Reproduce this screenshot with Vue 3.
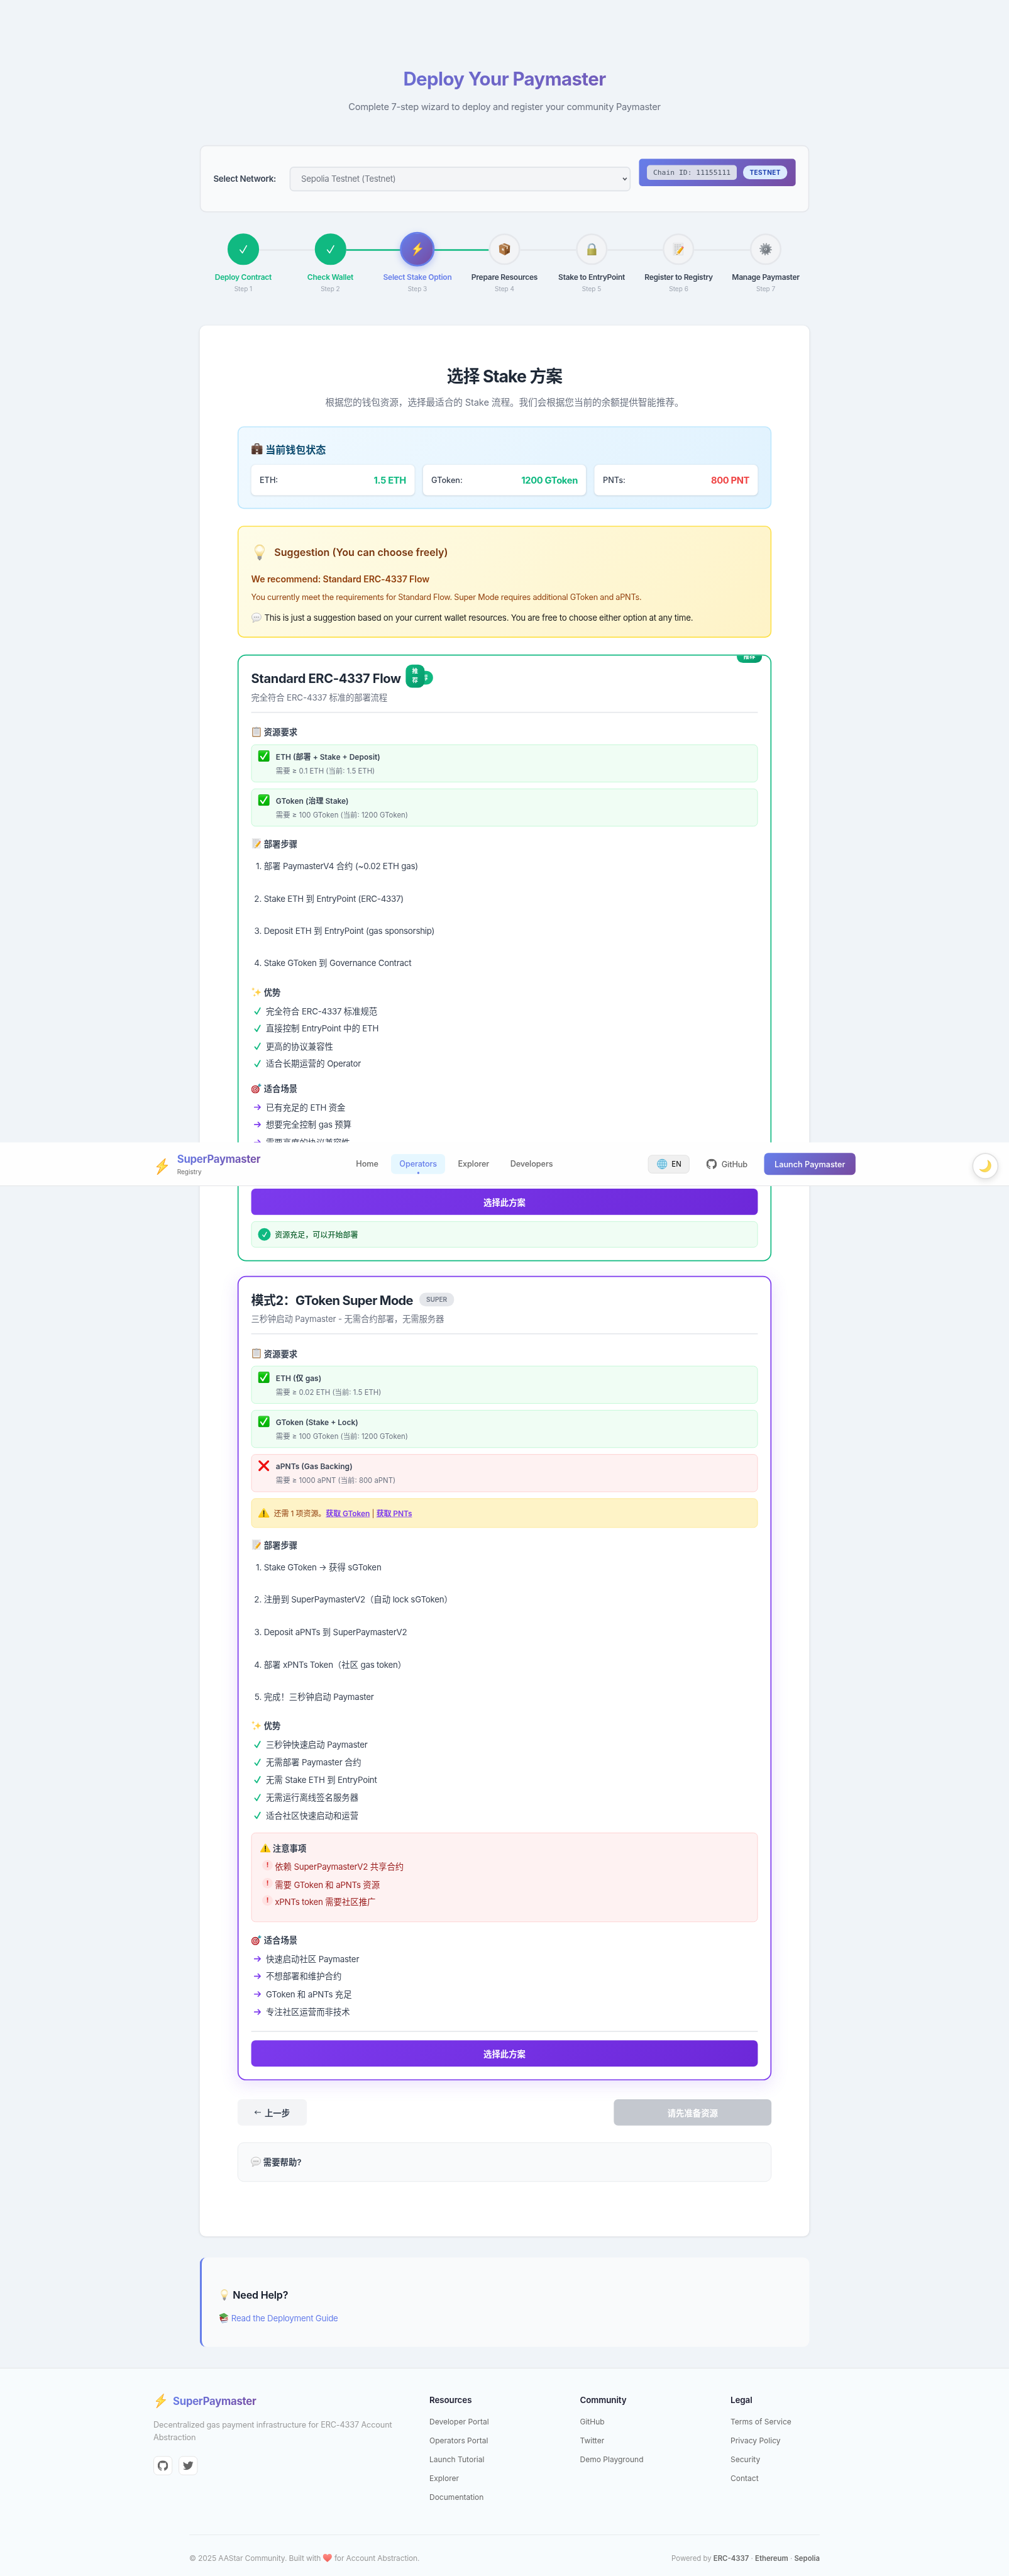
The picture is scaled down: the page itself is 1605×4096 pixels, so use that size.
<script setup>
const steps = [
  { name: 'Deploy Contract', state: 'done' },
  { name: 'Check Wallet', state: 'done', line: true },
  { name: 'Select Stake Option', state: 'active', line: true },
  { name: 'Prepare Resources', icon: 'box' },
  { name: 'Stake to EntryPoint', icon: 'lock' },
  { name: 'Register to Registry', icon: 'memo' },
  { name: 'Manage Paymaster', icon: 'gear' },
]

const balances = [
  { label: 'ETH:', value: '1.5 ETH' },
  { label: 'GToken:', value: '1200 GToken' },
  { label: 'PNTs:', value: '800 PNT', low: true },
]

const options = [
  {
    kind: 'standard',
    title: 'Standard ERC-4337 Flow',
    desc: '完全符合 ERC-4337 标准的部署流程',
    reqs: [
      { ok: true, name: 'ETH (部署 + Stake + Deposit)', need: '需要 ≥ 0.1 ETH (当前: 1.5 ETH)' },
      { ok: true, name: 'GToken (治理 Stake)', need: '需要 ≥ 100 GToken (当前: 1200 GToken)' },
    ],
    flow: [
      '部署 PaymasterV4 合约 (~0.02 ETH gas)',
      'Stake ETH 到 EntryPoint (ERC-4337)',
      'Deposit ETH 到 EntryPoint (gas sponsorship)',
      'Stake GToken 到 Governance Contract',
    ],
    pros: ['完全符合 ERC-4337 标准规范', '直接控制 EntryPoint 中的 ETH', '更高的协议兼容性', '适合长期运营的 Operator'],
    cautions: [],
    fits: ['已有充足的 ETH 资金', '想要完全控制 gas 预算', '需要高度的协议兼容性'],
  },
  {
    kind: 'super',
    title: '模式2：GToken Super Mode',
    desc: '三秒钟启动 Paymaster - 无需合约部署，无需服务器',
    reqs: [
      { ok: true, name: 'ETH (仅 gas)', need: '需要 ≥ 0.02 ETH (当前: 1.5 ETH)' },
      { ok: true, name: 'GToken (Stake + Lock)', need: '需要 ≥ 100 GToken (当前: 1200 GToken)' },
      { ok: false, name: 'aPNTs (Gas Backing)', need: '需要 ≥ 1000 aPNT (当前: 800 aPNT)' },
    ],
    flow: [
      'Stake GToken → 获得 sGToken',
      '注册到 SuperPaymasterV2（自动 lock sGToken）',
      'Deposit aPNTs 到 SuperPaymasterV2',
      '部署 xPNTs Token（社区 gas token）',
      '完成！三秒钟启动 Paymaster',
    ],
    pros: ['三秒钟快速启动 Paymaster', '无需部署 Paymaster 合约', '无需 Stake ETH 到 EntryPoint', '无需运行离线签名服务器', '适合社区快速启动和运营'],
    cautions: ['依赖 SuperPaymasterV2 共享合约', '需要 GToken 和 aPNTs 资源', 'xPNTs token 需要社区推广'],
    fits: ['快速启动社区 Paymaster', '不想部署和维护合约', 'GToken 和 aPNTs 充足', '专注社区运营而非技术'],
  },
]

const footerCols = [
  { title: 'Resources', links: ['Developer Portal', 'Operators Portal', 'Launch Tutorial', 'Explorer', 'Documentation'] },
  { title: 'Community', links: ['GitHub', 'Twitter', 'Demo Playground'] },
  { title: 'Legal', links: ['Terms of Service', 'Privacy Policy', 'Security', 'Contact'] },
]

// Latin runs are tracked slightly tighter than Chinese ones
const runs = (text) =>
  text
    .split(/([\u2e80-\uffef]+)/)
    .filter(Boolean)
    .map((t) => ({ t, latin: !/[\u2e80-\uffef]/.test(t) }))
</script>

<template>
  <div class="viewport">
    <svg class="sprite" width="0" height="0" aria-hidden="true">
      <defs>
        <linearGradient id="gBolt" x1="0" y1="0" x2="0" y2="1"><stop offset="0" stop-color="#ffc62b" /><stop offset=".5" stop-color="#ffe34a" /><stop offset="1" stop-color="#ffb31f" /></linearGradient>
        <linearGradient id="gBulb" x1="0" y1="0" x2="0" y2="1"><stop offset="0" stop-color="#f6dc8d" /><stop offset=".45" stop-color="#fffbe6" /><stop offset="1" stop-color="#f3cf6b" /></linearGradient>
        <linearGradient id="gLock" x1="0" y1="0" x2="1" y2="0"><stop offset="0" stop-color="#b3ab50" /><stop offset=".3" stop-color="#cfc86c" /><stop offset="1" stop-color="#9c933a" /></linearGradient>
        <linearGradient id="gCase" x1="0" y1="0" x2="0" y2="1"><stop offset="0" stop-color="#8a6656" /><stop offset="1" stop-color="#4b3128" /></linearGradient>
        <linearGradient id="gOk" x1="0" y1="0" x2="0" y2="1"><stop offset="0" stop-color="#3ed636" /><stop offset=".3" stop-color="#0cc40c" /><stop offset="1" stop-color="#05ad08" /></linearGradient>
        <linearGradient id="gTalk" x1="0" y1="0" x2="0" y2="1"><stop offset="0" stop-color="#ffffff" /><stop offset="1" stop-color="#dcdcdc" /></linearGradient>
        <linearGradient id="gMoon" x1="0" y1="0" x2="1" y2="1"><stop offset="0" stop-color="#f7c52c" /><stop offset="1" stop-color="#ffe76a" /></linearGradient>
        <linearGradient id="gHeart" x1="0" y1="0" x2="0" y2="1"><stop offset="0" stop-color="#ff8f87" /><stop offset="1" stop-color="#ef5f58" /></linearGradient>
        <linearGradient id="gWarn" x1="0" y1="0" x2="0" y2="1"><stop offset="0" stop-color="#ffe03a" /><stop offset="1" stop-color="#fcc404" /></linearGradient>
        <linearGradient id="gGear" x1="0" y1="0" x2="1" y2="1"><stop offset="0" stop-color="#a3a9af" /><stop offset="1" stop-color="#6b7178" /></linearGradient>
      </defs>
      <symbol id="bolt" viewBox="0 0 22 31">
        <path d="M17 .5.8 16.2l7.4.6L2 30.5l19.4-17.6-8-.4z" fill="url(#gBolt)" stroke="#f9a11b" stroke-width="1.2" stroke-linejoin="round" />
        <path d="M14.500 4.600 4.200 14.800l6.300.5-3.900 9.200" fill="none" stroke="#fff3a3" stroke-width="1" />
      </symbol>
      <symbol id="box" viewBox="0 0 24 24">
        <path d="M1.500 4.800 12.600 8.600v15L2.200 18.400z" fill="#b47c48" />
        <path d="M12.600 8.600 22.500 4.800l-.4 13.400-9.500 5.400z" fill="#8a5528" />
        <path d="M1.500 4.800 11.800.6l10.700 4.200-9.900 3.800z" fill="#a97343" />
        <path d="m5 3.400 10.800 4v4.800l2.800-1.200V6.300L8.200 2z" fill="#dcbfa0" />
        <path d="m7.200 10 3.400 1.200v4L7.200 13.800z" fill="#e9e1d8" />
        <path d="m16.200 17.200 3.800-2v2.600l-3.800 2z" fill="#5d3817" />
      </symbol>
      <symbol id="lock" viewBox="0 0 24 24">
        <path d="M6.200 12V7.800C6.200 4.400 8.800 2 12 2s5.800 2.400 5.800 5.800V12" fill="none" stroke="#86a0b0" stroke-width="2.800" />
        <path d="M5.900 12V7.800C5.900 4.400 8.600 1.500 12 1.500" fill="none" stroke="#c5dbe6" stroke-width="1.200" />
        <rect x="3.800" y="10.800" width="16.800" height="12.400" rx="1" fill="url(#gLock)" />
        <path d="M4 14.200h16.400M4 17h16.400M4 19.800h16.400" stroke="#8a7c25" stroke-width=".5" opacity=".5" />
        <rect x="3.800" y="22.200" width="16.800" height="1" fill="#857b2d" />
      </symbol>
      <symbol id="memo" viewBox="0 0 24 24">
        <rect x="2.200" y=".6" width="18.600" height="22.800" fill="#efefef" stroke="#d2d2d4" stroke-width=".6" />
        <path d="M4.500 3.600h13.500M4.500 6.400h14M4.500 9.200h10M4.500 12h9M4.500 14.800h5M4.500 17.600h4M4.500 20.400h3" stroke="#8e9096" stroke-width=".9" stroke-dasharray="2.200 .9 1.300 .7" />
        <path d="m17.600 8.200 3.400 2.300-7.600 10.400-4.900 2 .9-5.100z" fill="#f8c020" />
        <path d="m13.100 21 8-10.400-1.500-1.100L11.400 20z" fill="#e08e12" />
        <path d="m17.600 8.200 1-1.300c1-1 4 .9 3.500 2.200l-1.100 1.400z" fill="#ef6b6b" />
        <path d="m9.400 17.800-.9 5.100 4.900-2z" fill="#f3d9b0" />
        <path d="m8.800 21.200-.3 1.700 1.700-.7z" fill="#333" />
      </symbol>
      <symbol id="gear" viewBox="0 0 24 24">
        <circle cx="12" cy="12" r="10.200" fill="none" stroke="#8b9197" stroke-width="3" stroke-dasharray="2.100 3.240" />
        <circle cx="12" cy="12" r="6.400" fill="none" stroke="url(#gGear)" stroke-width="5.400" />
        <circle cx="12" cy="12" r="8.300" fill="none" stroke="#b4bac0" stroke-width=".8" />
        <circle cx="12" cy="12" r="4" fill="#565c63" />
        <circle cx="12" cy="12" r="2.900" fill="#d9dee2" />
        <path d="M12 10.200v3.600" stroke="#4a5057" stroke-width="1.500" />
      </symbol>
      <symbol id="case" viewBox="0 0 24 24">
        <path d="M8 6V2.8C8 1.8 8.600 1.300 9.500 1.300h5c.9 0 1.500.5 1.500 1.500V6" fill="none" stroke="#4d3a33" stroke-width="1.8" />
        <rect x=".8" y="5" width="22.400" height="18" rx="1.800" fill="url(#gCase)" />
        <rect x="5" y="5" width="1.600" height="18" fill="#3e2820" opacity=".6" />
        <rect x="17.400" y="5" width="1.600" height="18" fill="#3e2820" opacity=".6" />
        <path d="M.8 13c6 2.500 16.400 2.500 22.400 0" stroke="#37231b" stroke-width="1" fill="none" />
        <rect x="10" y="12.500" width="4" height="3.600" rx=".6" fill="#c9c4bb" />
        <rect x="9.800" y="18.800" width="4.400" height="4" fill="#f0e6df" />
      </symbol>
      <symbol id="bulb" viewBox="0 0 20 30">
        <path d="M10 .8c5.400 0 9 4 9 8.900 0 5.400-4 7.500-5 12.300H6C5 17.200 1 15.100 1 9.700 1 4.800 4.600.8 10 .8z" fill="url(#gBulb)" stroke="#e3c268" stroke-width=".8" />
        <ellipse cx="10" cy="8.500" rx="5" ry="5.500" fill="#fffef4" opacity=".9" />
        <path d="M6.200 22h7.600v4.600c0 1.500-2 2.600-3.800 2.600s-3.800-1.100-3.800-2.600z" fill="#b4b4b0" />
        <path d="M6.200 24h7.600M6.400 26.200h7.200" stroke="#77777a" stroke-width=".9" />
        <path d="M8 28.500h4l-1 1.300H9z" fill="#3d3d3f" />
      </symbol>
      <symbol id="talk" viewBox="0 0 24 24">
        <path d="M12 1.500c6.300 0 10.800 3.800 10.800 9s-4.500 9-10.800 9c-1 0-2-.1-2.900-.3-1.300 1.900-3.300 3.300-5.600 3.500 1-1.400 1.500-3 1.400-5C2.600 16 1.200 13.500 1.200 10.500c0-5.200 4.500-9 10.800-9z" fill="url(#gTalk)" stroke="#b5b5b5" stroke-width="1.200" />
        <circle cx="7.700" cy="10.600" r="1.200" fill="#8b8b8b" /><circle cx="12" cy="10.600" r="1.200" fill="#8b8b8b" /><circle cx="16.300" cy="10.600" r="1.200" fill="#8b8b8b" />
      </symbol>
      <symbol id="clip" viewBox="0 0 24 24">
        <rect x="2.300" y="2" width="19.400" height="21.500" rx="1.600" fill="#b08658" />
        <rect x="4.300" y="3.800" width="15.400" height="17.600" fill="#f2f2f3" />
        <rect x="6.300" y="6.500" width="11.400" height="12" fill="#d6d6d8" />
        <path d="M6.500 5.200V3.400h3.200C9.700 2 10.600.8 12 .8s2.300 1.200 2.300 2.600h3.200v1.800z" fill="#b2b7bc" stroke="#93989e" stroke-width=".5" />
      </symbol>
      <symbol id="ok" viewBox="0 0 24 24">
        <rect x=".5" y=".5" width="23" height="23" rx="3.600" fill="url(#gOk)" stroke="#0b9a10" stroke-width="1" />
        <path d="m5.600 12.800 4.200 6L18.300 5" fill="none" stroke="#fff" stroke-width="2.600" stroke-linecap="round" stroke-linejoin="round" />
      </symbol>
      <symbol id="cross" viewBox="0 0 24 24">
        <path d="M3 3 21 21M21 3 3 21" stroke="#ee0f0f" stroke-width="4.200" stroke-linecap="round" />
      </symbol>
      <symbol id="warn" viewBox="0 0 24 21">
        <path d="M12 1.200c.6 0 1 .3 1.300.8L23.200 18.600c.5 1-.1 1.900-1.100 1.900H1.900c-1 0-1.600-.9-1.100-1.900L10.700 2c.3-.5.7-.8 1.300-.8z" fill="url(#gWarn)" stroke="#eab308" stroke-width=".6" />
        <path d="M12 6.500v7.300" stroke="#231f10" stroke-width="2.200" stroke-linecap="round" />
        <circle cx="12" cy="17.300" r="1.400" fill="#231f10" />
      </symbol>
      <symbol id="sparkle" viewBox="0 0 24 24">
        <path d="M15.500 3.500c.9 5.800 2 7.300 7.700 9-5.700 1.700-6.800 3.200-7.700 9-.9-5.800-2-7.300-7.700-9 5.700-1.700 6.800-3.200 7.700-9z" fill="#ffd04a" />
        <path d="M4.500.8c.5 3 1.100 3.800 4 4.600-2.900.8-3.500 1.600-4 4.600-.5-3-1.100-3.800-4-4.600 2.900-.8 3.500-1.600 4-4.600z" fill="#ffd257" />
        <path d="M7.500 15.200c.4 2.500 1 3.400 3.600 4.100-2.600.7-3.200 1.600-3.600 4.100-.4-2.500-1-3.400-3.600-4.100 2.600-.7 3.200-1.600 3.600-4.100z" fill="#ffd257" />
      </symbol>
      <symbol id="target" viewBox="0 0 24 24">
        <circle cx="9.500" cy="14.500" r="9.300" fill="#b81f28" />
        <circle cx="9.200" cy="14.500" r="7" fill="#f3eded" />
        <circle cx="9.200" cy="14.500" r="5.300" fill="#d2303a" />
        <circle cx="9.200" cy="14.500" r="3.300" fill="#f3eded" />
        <circle cx="9.200" cy="14.500" r="1.700" fill="#c8202a" />
        <path d="m9.200 14.500 9-8.500" stroke="#475b60" stroke-width="1.200" />
        <path d="m16 7.700-.3-3.400L19.800.8l.7 2.800 3.200.9-3.800 4z" fill="#3d9fae" />
      </symbol>
      <symbol id="globe" viewBox="0 0 24 24">
        <circle cx="12" cy="12" r="11" fill="#c9edf9" stroke="#4ba9cf" stroke-width="1.300" />
        <ellipse cx="12" cy="12" rx="5.200" ry="11" fill="none" stroke="#4ba9cf" stroke-width="1.200" />
        <path d="M12 1v22M1 12h22M2.700 6.500h18.600M2.700 17.500h18.600" stroke="#4ba9cf" stroke-width="1.200" />
      </symbol>
      <symbol id="moon" viewBox="0 0 24 24">
        <path d="M16.200.8c4.600 2.200 7 6.700 6.300 12-.8 6.300-6 10.700-12.300 10.300-4-.2-7.300-2-9.300-5.200 3.700 1.800 8.400 1.400 11.900-1.300 4.800-3.700 6-10 3.400-15.800z" fill="url(#gMoon)" stroke="#e9b92f" stroke-width=".7" />
      </symbol>
      <symbol id="books" viewBox="0 0 24 24">
        <path d="m5 18.500 14-1.500 1.500 4L8 23.500z" fill="#3f72b5" />
        <path d="m6.500 20 13.200-1.700.8 2.300L8 22.600z" fill="#f2f2f2" />
        <path d="m2.500 10 4-1.500 14 2 .5 6.500L5.500 19C3.500 17 2.500 12.500 2.500 10z" fill="#b5312c" />
        <path d="M6.500 14.500 20 13.200l.2 2.400L7 17.400z" fill="#f4ece0" />
        <path d="m1.500 5 11-4.500L22.500 7l-9.800 5.200z" fill="#58ab4e" />
        <path d="m1.500 5 11.200 7.200v2L2 7z" fill="#2e6e2b" />
        <path d="m12.700 12.200 9.800-5.200v1.800l-9.800 5.400z" fill="#e9e6d6" />
      </symbol>
      <symbol id="heart" viewBox="0 0 24 22">
        <path d="M12 21.500C6 17 .6 12.500.6 7.200.6 3.500 3.300.8 6.600.8c2.300 0 4.300 1.300 5.400 3.200C13.100 2.100 15.100.8 17.400.8c3.300 0 6 2.700 6 6.400 0 5.300-5.400 9.800-11.400 14.300z" fill="url(#gHeart)" />
      </symbol>
      <symbol id="check" viewBox="0 0 14 16"><path d="m2 9.400 3.600 4.400L12 2.400" fill="none" stroke="currentColor" stroke-width="2.200" stroke-linecap="round" stroke-linejoin="round" /></symbol>
      <symbol id="thincheck" viewBox="0 0 24 24"><path d="m4.500 13.500 5.500 7L19.500 4" fill="none" stroke="currentColor" stroke-width="2.200" stroke-linecap="round" stroke-linejoin="round" /></symbol>
      <symbol id="arrow" viewBox="0 0 14 12"><path d="M1.200 6h11M8 1.600 12.400 6 8 10.400" fill="none" stroke="currentColor" stroke-width="2" stroke-linecap="round" stroke-linejoin="round" /></symbol>
      <symbol id="github" viewBox="0 0 16 16"><path fill="currentColor" d="M8 0C3.580 0 0 3.580 0 8c0 3.540 2.290 6.530 5.470 7.590.4.07.55-.17.55-.38 0-.19-.01-.82-.01-1.490-2.010.37-2.530-.49-2.690-.94-.09-.23-.48-.94-.82-1.130-.28-.15-.68-.52-.01-.53.63-.01 1.080.58 1.230.82.72 1.210 1.870.87 2.330.66.07-.52.28-.87.51-1.070-1.780-.2-3.640-.89-3.640-3.950 0-.87.31-1.590.82-2.150-.08-.2-.36-1.020.08-2.120 0 0 .67-.21 2.200.82.64-.18 1.320-.27 2-.27s1.360.09 2 .27c1.530-1.040 2.200-.82 2.200-.82.44 1.100.16 1.920.08 2.120.51.56.82 1.270.82 2.150 0 3.070-1.870 3.750-3.650 3.950.29.25.54.73.54 1.480 0 1.070-.01 1.930-.01 2.200 0 .21.15.46.55.38A8.013 8.013 0 0 0 16 8c0-4.420-3.580-8-8-8z" /></symbol>
      <symbol id="twitter" viewBox="0 0 24 24"><path fill="currentColor" d="M23.953 4.570a10 10 0 0 1-2.825.775 4.958 4.958 0 0 0 2.163-2.723c-.951.555-2.005.959-3.127 1.184a4.920 4.920 0 0 0-8.384 4.482C7.690 8.095 4.067 6.130 1.640 3.162a4.822 4.822 0 0 0-.666 2.475c0 1.710.87 3.213 2.188 4.096a4.904 4.904 0 0 1-2.228-.616v.06a4.923 4.923 0 0 0 3.946 4.827 4.996 4.996 0 0 1-2.212.085 4.936 4.936 0 0 0 4.604 3.417 9.867 9.867 0 0 1-6.102 2.105c-.39 0-.779-.023-1.170-.067a13.995 13.995 0 0 0 7.557 2.209c9.053 0 13.998-7.496 13.998-13.985 0-.21 0-.42-.015-.63A9.935 9.935 0 0 0 24 4.590z" /></symbol>
    </svg>

    <div class="page">
      <header class="hero">
        <h1>Deploy Your Paymaster</h1>
        <p>Complete 7-step wizard to deploy and register your community Paymaster</p>
      </header>

      <section class="network">
        <label>Select Network:</label>
        <div class="select">
          <span>Sepolia Testnet (Testnet)</span>
          <svg width="10" height="7" viewBox="0 0 10 7"><path d="m1.500 1.200 3.500 4 3.500-4" fill="none" stroke="#4b4f57" stroke-width="1.800" /></svg>
        </div>
        <div class="chain">
          <code>Chain ID: 11155111</code>
          <span>TESTNET</span>
        </div>
      </section>

      <ol class="wizard">
        <li v-for="(s, i) in steps" :key="s.name" :class="s.state">
          <i v-if="i < steps.length - 1" class="line" :class="{ on: s.line }"></i>
          <div class="dot">
            <svg v-if="s.state === 'done'" class="i22"><use href="#thincheck" /></svg>
            <svg v-else-if="s.state === 'active'" class="dotbolt"><use href="#bolt" /></svg>
            <svg v-else class="i24"><use :href="'#' + s.icon" /></svg>
          </div>
          <b>{{ s.name }}</b>
          <small>Step {{ i + 1 }}</small>
        </li>
      </ol>

      <main class="panel">
        <h2>选择 Stake 方案</h2>
        <p class="lead">根据您的钱包资源，选择最适合的 Stake 流程。我们会根据您当前的余额提供智能推荐。</p>

        <section class="wallet">
          <h3><svg class="i22"><use href="#case" /></svg>当前钱包状态</h3>
          <div class="balances">
            <div v-for="b in balances" :key="b.label"><span>{{ b.label }}</span><b :class="{ low: b.low }">{{ b.value }}</b></div>
          </div>
        </section>

        <section class="suggest">
          <div class="shead"><svg class="bulb"><use href="#bulb" /></svg><h3>Suggestion (You can choose freely)</h3></div>
          <p class="rec">We recommend: Standard ERC-4337 Flow</p>
          <p class="why">You currently meet the requirements for Standard Flow. Super Mode requires additional GToken and aPNTs.</p>
          <p class="note"><svg class="i20"><use href="#talk" /></svg>This is just a suggestion based on your current wallet resources. You are free to choose either option at any time.</p>
        </section>

        <section v-for="o in options" :key="o.kind" class="opt" :class="o.kind">
          <div v-if="o.kind === 'standard'" class="ribbon">推荐</div>
          <header>
            <div class="trow">
              <h3>{{ o.title }}</h3>
              <div v-if="o.kind === 'standard'" class="badges">
                <span class="under">荐</span>
                <span class="over">推<br />荐</span>
              </div>
              <span v-else class="tag">SUPER</span>
            </div>
            <p>{{ o.desc }}</p>
          </header>

          <h4 class="first"><svg class="i20"><use href="#clip" /></svg>资源要求</h4>
          <div class="reqs">
            <div v-for="r in o.reqs" :key="r.name" class="req" :class="{ bad: !r.ok }">
              <svg class="i22"><use :href="r.ok ? '#ok' : '#cross'" /></svg>
              <div><b>{{ r.name }}</b><span>{{ r.need }}</span></div>
            </div>
            <div v-if="o.kind === 'super'" class="missing">
              <svg class="warn"><use href="#warn" /></svg>
              <span>还需 1 项资源。<a>获取 GToken</a> | <a>获取 PNTs</a></span>
            </div>
          </div>

          <h4 class="flowtitle"><svg class="i20"><use href="#memo" /></svg>部署步骤</h4>
          <ol class="flow">
            <li v-for="(f, n) in o.flow" :key="f"><em>{{ n + 1 }}.</em><p><span v-for="(r, k) in runs(f)" :key="k" :class="{ latin: r.latin }">{{ r.t }}</span></p></li>
          </ol>

          <h4 class="protitle"><svg class="i20"><use href="#sparkle" /></svg>优势</h4>
          <ul class="pts">
            <li v-for="p in o.pros" :key="p"><svg class="tick"><use href="#check" /></svg><p><span v-for="(r, k) in runs(p)" :key="k" :class="{ latin: r.latin }">{{ r.t }}</span></p></li>
          </ul>

          <div v-if="o.cautions.length" class="caution">
            <h4><svg class="warn small"><use href="#warn" /></svg>注意事项</h4>
            <ul class="pts red">
              <li v-for="c in o.cautions" :key="c"><i>!</i><p><span v-for="(r, k) in runs(c)" :key="k" :class="{ latin: r.latin }">{{ r.t }}</span></p></li>
            </ul>
          </div>

          <h4 class="fittitle"><svg class="i20"><use href="#target" /></svg>适合场景</h4>
          <ul class="pts fits">
            <li v-for="f in o.fits" :key="f"><svg class="arr"><use href="#arrow" /></svg><p><span v-for="(r, k) in runs(f)" :key="k" :class="{ latin: r.latin }">{{ r.t }}</span></p></li>
          </ul>

          <footer>
            <button>选择此方案</button>
            <div v-if="o.kind === 'standard'" class="ready">
              <i><svg><use href="#check" /></svg></i>资源充足，可以开始部署
            </div>
          </footer>
        </section>

        <div class="actions">
          <button class="prev"><svg width="13" height="10" viewBox="0 0 13 10"><path d="M12.500 5H1M4.500 1.800 1 5l3.500 3.200" fill="none" stroke="#374151" stroke-width="1.200" /></svg>上一步</button>
          <button class="next">请先准备资源</button>
        </div>

        <div class="faq"><svg class="i20"><use href="#talk" /></svg>需要帮助?</div>
      </main>

      <aside class="help">
        <h3><svg class="hbulb"><use href="#bulb" /></svg>Need Help?</h3>
        <a><svg class="i20"><use href="#books" /></svg>Read the Deployment Guide</a>
      </aside>

      <footer class="foot">
        <div class="cols">
          <div class="brand">
            <div class="logo"><svg><use href="#bolt" /></svg><span>SuperPaymaster</span></div>
            <p>Decentralized gas payment infrastructure for ERC-4337 Account Abstraction</p>
            <div class="social">
              <a><svg><use href="#github" /></svg></a>
              <a><svg><use href="#twitter" /></svg></a>
            </div>
          </div>
          <div v-for="c in footerCols" :key="c.title" class="col">
            <h4>{{ c.title }}</h4>
            <a v-for="l in c.links" :key="l">{{ l }}</a>
          </div>
        </div>
        <div class="legal">
          <span class="copy">© 2025 AAStar Community. Built with <svg><use href="#heart" /></svg> for Account Abstraction.</span>
          <span class="power">Powered by <b>ERC-4337</b> · <b>Ethereum</b> · <b>Sepolia</b></span>
        </div>
      </footer>

      <nav class="topbar">
        <div class="logo">
          <svg><use href="#bolt" /></svg>
          <div><strong>SuperPaymaster</strong><small>Registry</small></div>
        </div>
        <div class="links">
          <a>Home</a><a class="current">Operators</a><a>Explorer</a><a>Developers</a>
        </div>
        <div class="tools">
          <button class="lang"><svg><use href="#globe" /></svg>EN</button>
          <a class="gh"><svg><use href="#github" /></svg>GitHub</a>
          <button class="launch">Launch Paymaster</button>
        </div>
        <button class="theme"><svg><use href="#moon" /></svg></button>
      </nav>
    </div>
  </div>
</template>

<style>
html,
body {
  margin: 0;
  background: #f0f4f8;
}
</style>

<style scoped>
* {
  box-sizing: border-box;
}
.viewport {
  width: 1605px;
  height: 4096px;
  overflow: hidden;
}
.sprite {
  position: absolute;
}
.page {
  position: relative;
  display: flex;
  flex-direction: column;
  align-items: center;
  width: 1920px;
  height: 4900px;
  transform: scale(0.8359375);
  transform-origin: 0 0;
  background: #f0f4f8;
  color: #1f2937;
  font-family: Inter, "Noto Sans CJK SC", sans-serif;
  font-size: 16px;
}
h1, h2, h3, h4, p, ol, ul {
  margin: 0;
  padding: 0;
  list-style: none;
}
button {
  font: inherit;
  border: 0;
  padding: 0;
}
svg {
  flex: none;
}
.latin {
  letter-spacing: -0.31px;
  white-space: pre;
}
.i24 { width: 24px; height: 24px; }
.i22 { width: 22px; height: 22px; }
.i20 { width: 20px; height: 20px; }

.hero {
  height: 276px;
  padding-top: 128px;
  text-align: center;
}
.hero h1 {
  width: 1160px;
  font-size: 35.2px;
  line-height: 44px;
  font-weight: 700;
  letter-spacing: -0.7px;
  background: linear-gradient(135deg, #667eea 0%, #764ba2 100%);
  -webkit-background-clip: text;
  background-clip: text;
  color: transparent;
}
.hero p {
  margin-top: 18px;
  font-size: 17.6px;
  letter-spacing: -0.34px;
  line-height: 26px;
  color: #6b7280;
}

.network {
  display: flex;
  align-items: center;
  width: 1160px;
  height: 128px;
  padding: 0 24px;
  border: 2px solid #e5e7eb;
  border-radius: 12px;
  background: #f9fafb;
}
.network label {
  width: 145px;
  font-weight: 600;
  letter-spacing: -0.3px;
  color: #374151;
}
.select {
  display: flex;
  align-items: center;
  justify-content: space-between;
  width: 649px;
  height: 47px;
  padding: 0 4px 0 20px;
  border: 2px solid #e0e3e8;
  border-radius: 8px;
  background: #f4f5f7;
  color: #717680;
  letter-spacing: -0.35px;
}
.chain {
  display: flex;
  align-items: center;
  gap: 12px;
  width: 298px;
  height: 52px;
  margin: -24px 0 0 16px;
  padding-left: 15px;
  border-radius: 6px;
  background: linear-gradient(135deg, #667eea 0%, #764ba2 100%);
}
.chain code {
  width: 171px;
  border-radius: 6px;
  background: #dadce9;
  color: #4b5563;
  font-family: "DejaVu Sans Mono", monospace;
  font-size: 13.6px;
  line-height: 28px;
  text-align: center;
}
.chain span {
  width: 84px;
  border-radius: 12px;
  background: #dbeafe;
  color: #1e40af;
  font-size: 12px;
  font-weight: 700;
  letter-spacing: 0.5px;
  line-height: 26px;
  text-align: center;
}

.wizard {
  display: flex;
  width: 1160px;
  margin-top: 40px;
  height: 175px;
}
.wizard li {
  position: relative;
  flex: 1;
  display: flex;
  flex-direction: column;
  align-items: center;
}
.line {
  position: absolute;
  top: 30px;
  left: calc(50% + 30px);
  width: calc(100% - 60px);
  height: 3px;
  background: #e5e7eb;
}
.line.on {
  background: #10b981;
}
.dot {
  position: relative;
  display: flex;
  align-items: center;
  justify-content: center;
  width: 60px;
  height: 60px;
  border: 3px solid #e5e7eb;
  border-radius: 50%;
  background: #f3f4f6;
}
.done .dot {
  border-color: #10b981;
  background: #10b981;
  color: #fff;
}
.done .dot svg {
  width: 20px;
  height: 20px;
}
.active .dot {
  border-color: #667eea;
  background: linear-gradient(135deg, #667eea 0%, #764ba2 100%);
  transform: scale(1.1);
  box-shadow: 0 4px 12px rgba(102, 126, 234, 0.4);
}
.dotbolt {
  width: 17px;
  height: 24px;
}
.wizard b {
  margin-top: 13px;
  font-size: 14.4px;
  font-weight: 600;
  letter-spacing: -0.32px;
  line-height: 20px;
  color: #374151;
  white-space: nowrap;
}
.wizard small {
  margin-top: 4px;
  font-size: 12px;
  line-height: 18px;
  color: #9ca3af;
}
.wizard .done b { color: #10b981; }
.wizard .active b { color: #667eea; }

.panel {
  width: 1160px;
  height: 3635px;
  padding: 77px 72px 0;
  border-radius: 12px;
  background: #fff;
  box-shadow: 0 1px 4px rgba(0, 0, 0, 0.1);
}
.panel h2 {
  font-size: 32px;
  font-weight: 700;
  letter-spacing: -1.1px;
  line-height: 40px;
  text-align: center;
}
.lead {
  margin-top: 16px;
  font-size: 17.6px;
  letter-spacing: -0.18px;
  line-height: 26px;
  text-align: center;
  color: #6b7280;
}

.wallet {
  height: 157px;
  margin-top: 33px;
  padding: 27px 24px 0;
  border: 2px solid #bae6fd;
  border-radius: 12px;
  background: linear-gradient(135deg, #f0f9ff 0%, #e0f2fe 100%);
}
.wallet h3 {
  display: flex;
  align-items: center;
  gap: 5px;
  height: 28px;
  font-size: 19.2px;
  font-weight: 600;
  color: #0c4a6e;
}
.balances {
  display: flex;
  gap: 16px;
  margin-top: 16px;
}
.balances div {
  flex: 1;
  display: flex;
  align-items: center;
  justify-content: space-between;
  height: 58px;
  padding: 0 16px;
  border-radius: 8px;
  background: #fff;
  box-shadow: 0 1px 3px rgba(0, 0, 0, 0.1);
}
.balances span {
  font-size: 15.2px;
  font-weight: 500;
  color: #374151;
}
.balances b {
  font-size: 17.6px;
  font-weight: 700;
  letter-spacing: -0.4px;
  color: #10b981;
}
.balances b.low {
  color: #ef4444;
}

.suggest {
  height: 213px;
  margin-top: 32px;
  padding: 28px 24px 0;
  border: 2px solid #fde047;
  border-radius: 12px;
  background: linear-gradient(135deg, #fefce8 0%, #fef3c7 100%);
}
.shead {
  display: flex;
  align-items: center;
  height: 40px;
}
.bulb {
  width: 20px;
  height: 31px;
  margin: 0 18px 0 6px;
}
.suggest h3 {
  font-size: 19.2px;
  font-weight: 600;
  color: #78350f;
}
.suggest p {
  font-size: 15.2px;
  letter-spacing: -0.27px;
  line-height: 26px;
  color: #92400e;
  white-space: nowrap;
}
.suggest .rec {
  margin-top: 19px;
  font-size: 17px;
  font-weight: 600;
  letter-spacing: -0.18px;
}
.suggest .why {
  margin-top: 8px;
}
.suggest .note {
  display: flex;
  align-items: center;
  gap: 5px;
  margin-top: 13px;
  font-size: 16px;
  letter-spacing: -0.34px;
  color: #1a1a1a;
}

.opt {
  position: relative;
  margin-top: 32px;
  padding: 24px;
  border: 2px solid #10b981;
  border-radius: 16px;
  background: #fff;
  overflow: hidden;
}
.opt.super {
  margin-top: 28px;
  border-color: #7c3aed;
  overflow: visible;
  box-shadow: 0 8px 32px rgba(124, 58, 237, 0.15);
}
.ribbon {
  position: absolute;
  top: -10px;
  right: 16px;
  width: 48px;
  height: 24px;
  border-radius: 12px;
  background: linear-gradient(135deg, #10b981 0%, #059669 100%);
  color: #fff;
  font-size: 11.5px;
  font-weight: 700;
  line-height: 23px;
  text-align: center;
}
.opt header {
  height: 85px;
  border-bottom: 2px solid #e5e7eb;
}
.trow {
  display: flex;
  align-items: center;
  height: 38px;
}
.trow h3 {
  font-size: 24px;
  font-weight: 700;
  letter-spacing: -0.42px;
  white-space: nowrap;
}
.super .trow h3 {
  letter-spacing: -0.75px;
}
.badges {
  position: relative;
  width: 52px;
  height: 44px;
  margin: -8px 0 0 9px;
}
.badges span {
  position: absolute;
  color: #fff;
  font-weight: 700;
  text-align: center;
}
.under {
  top: 12px;
  right: 0;
  width: 46px;
  height: 26px;
  padding-left: 16px;
  border-radius: 13px;
  background: #10b981;
  font-size: 11px;
  line-height: 26px;
}
.over {
  left: 0;
  top: 0;
  width: 36px;
  height: 44px;
  padding-top: 4px;
  border-radius: 12px;
  background: linear-gradient(135deg, #10b981 0%, #059669 100%);
  font-size: 11.2px;
  line-height: 17.9px;
}
.tag {
  width: 66px;
  height: 26px;
  margin-left: 12px;
  border-radius: 12px;
  background: #e5e7eb;
  color: #6b7280;
  font-size: 12px;
  font-weight: 600;
  line-height: 26px;
  text-align: center;
}
.opt header p {
  margin-top: 6px;
  font-size: 16px;
  letter-spacing: -0.2px;
  line-height: 24px;
  color: #6b7280;
}
h4 {
  display: flex;
  align-items: center;
  gap: 4px;
  height: 26px;
  font-size: 16px;
  font-weight: 600;
  color: #374151;
}
.first { margin: 23px 0 11px; }
.reqs {
  display: flex;
  flex-direction: column;
  gap: 12px;
}
.req {
  display: flex;
  gap: 12px;
  height: 72px;
  padding: 10px 12px;
  border: 1px solid #bbf7d0;
  border-radius: 8px;
  background: #f0fdf4;
}
.req.bad {
  border-color: #fecaca;
  background: #fef2f2;
}
.req b, .req span {
  display: block;
}
.req b {
  margin-top: 1px;
  font-size: 14.4px;
  font-weight: 600;
  line-height: 24px;
  color: #374151;
}
.req span {
  margin-top: 3px;
  font-size: 13.6px;
  line-height: 22px;
  color: #6b7280;
}
.missing {
  display: flex;
  align-items: center;
  gap: 8px;
  height: 56px;
  padding: 0 12px;
  border: 1px solid #fde68a;
  border-radius: 8px;
  background: #fef3c7;
  font-size: 14.4px;
  letter-spacing: -0.15px;
  color: #92400e;
}
.missing a {
  color: #7c3aed;
  font-weight: 600;
  text-decoration: underline;
}
.warn { width: 22px; height: 19px; }
.warn.small { width: 20px; height: 18px; }
.flowtitle { margin-top: 19px; }
.flow li {
  display: flex;
  height: 61.75px;
  line-height: 61.75px;
  color: #374151;
}
.flow em {
  width: 20px;
  margin-right: 4px;
  font-style: normal;
  text-align: right;
}
.protitle { margin-top: 9.7px; }
.pts { margin-top: 6.2px; }
.pts li {
  display: flex;
  align-items: center;
  height: 33.6px;
  padding-left: 5px;
  line-height: 24px;
  color: #374151;
}
.tick {
  width: 14px;
  height: 16px;
  margin-right: 9px;
  color: #10b981;
}
.arr {
  width: 14px;
  height: 12px;
  margin-right: 9px;
  color: #7c3aed;
}
.caution {
  margin-top: 16.6px;
  padding: 15.3px 16px 20.3px;
  border: 1px solid #fecaca;
  border-radius: 8px;
  background: #fef2f2;
}
.pts.red li {
  padding-left: 4px;
  color: #991b1b;
}
.red i {
  width: 20px;
  height: 20px;
  margin: -6px 4px 0 0;
  border-radius: 50%;
  background: #fee2e2;
  color: #dc2626;
  font-size: 12.8px;
  font-style: normal;
  font-weight: 700;
  line-height: 20px;
  text-align: center;
}
.fittitle { margin-top: 16.4px; }
.caution + .fittitle { margin-top: 20.3px; }
.fits { min-height: 134.4px; }
.opt footer {
  margin-top: 19.500px;
  padding-top: 16px;
  border-top: 2px solid #e5e7eb;
}
.opt button {
  display: block;
  width: 100%;
  height: 50px;
  border-radius: 8px;
  background: linear-gradient(135deg, #7c3aed 0%, #6d28d9 100%);
  color: #fff;
  font-weight: 600;
}
.ready {
  display: flex;
  align-items: center;
  gap: 8px;
  height: 50px;
  margin-top: 12px;
  padding-left: 12px;
  border: 1px solid #bbf7d0;
  border-radius: 8px;
  background: #f0fdf4;
  color: #166534;
  font-size: 14.4px;
  font-weight: 500;
}
.ready i {
  display: flex;
  align-items: center;
  justify-content: center;
  width: 24px;
  height: 24px;
  border-radius: 50%;
  background: #10b981;
  color: #fff;
}
.ready svg {
  width: 11px;
  height: 12px;
}

.actions {
  display: flex;
  justify-content: space-between;
  margin-top: 36px;
}
.actions button {
  height: 50px;
  border-radius: 8px;
  font-weight: 600;
}
.prev {
  display: flex;
  align-items: center;
  justify-content: center;
  gap: 6px;
  width: 132px;
  background: #f3f4f6;
  color: #374151;
}
.next {
  width: 300px;
  background: #c4c8cf;
  color: #fff;
}
.faq {
  display: flex;
  align-items: center;
  gap: 4px;
  height: 75px;
  margin-top: 32px;
  padding-left: 24px;
  border: 1px solid #e5e7eb;
  border-radius: 12px;
  background: #f9fafb;
  color: #374151;
  font-weight: 600;
}

.help {
  width: 1160px;
  height: 170px;
  margin-top: 40px;
  padding: 57px 32px 0;
  border-left: 4px solid #667eea;
  border-radius: 12px;
  background: #f9fafb;
}
.help h3, .help a {
  display: flex;
  align-items: center;
  height: 28px;
}
.help h3 {
  gap: 9px;
  padding-left: 4px;
  font-size: 19.2px;
  font-weight: 600;
  letter-spacing: -0.2px;
  color: #111827;
}
.hbulb { width: 14px; height: 22px; }
.help a {
  gap: 4px;
  margin-top: 16px;
  letter-spacing: -0.32px;
  color: #667eea;
}

.foot {
  width: 1920px;
  height: 396px;
  margin-top: 40px;
  border-top: 1px solid #e0e0e0;
  background: #f7fbfd;
}
.cols {
  display: flex;
  height: 316px;
  padding: 44px 0 0 292px;
}
.brand {
  width: 525px;
}
.logo {
  display: flex;
  align-items: center;
}
.logo span, .logo strong {
  font-weight: 700;
  letter-spacing: -0.3px;
  background: linear-gradient(135deg, #667eea 0%, #764ba2 100%);
  -webkit-background-clip: text;
  background-clip: text;
  color: transparent;
}
.brand .logo {
  height: 36px;
  font-size: 20px;
}
.brand .logo svg {
  width: 22px;
  height: 28px;
  margin: 0 12px 0 3px;
}
.brand p {
  width: 470px;
  margin-top: 14px;
  font-size: 15.2px;
  letter-spacing: -0.17px;
  line-height: 25px;
  color: #999;
}
.social {
  display: flex;
  gap: 12px;
  margin-top: 23px;
}
.social a {
  display: flex;
  align-items: center;
  justify-content: center;
  width: 36px;
  height: 36px;
  border: 1px solid #e0e0e0;
  border-radius: 8px;
  background: #fff;
  color: #666;
}
.social svg {
  width: 20px;
  height: 20px;
}
.col {
  width: 286.500px;
  padding-top: 3px;
}
.col h4 {
  margin-bottom: 10px;
  letter-spacing: -0.1px;
  color: #1a1a2e;
}
.col a {
  display: block;
  font-size: 14.4px;
  line-height: 36px;
  color: #666;
}
.legal {
  display: flex;
  align-items: center;
  justify-content: space-between;
  width: 1200px;
  height: 79px;
  margin: 0 auto;
  padding-top: 10px;
  border-top: 1px solid #e5e8ea;
  font-size: 14.4px;
  color: #999;
}
.legal span {
  line-height: 24px;
}
.copy {
  letter-spacing: -0.16px;
}
.power {
  font-size: 13.6px;
}
.legal svg {
  width: 18px;
  height: 17px;
  vertical-align: -3px;
}
.legal b {
  font-weight: 600;
  color: #666;
}

.topbar {
  position: absolute;
  top: 2173px;
  left: 0;
  width: 1920px;
  height: 83px;
  border-bottom: 1px solid #dedfe1;
  background: #fefefe;
}
.topbar .logo {
  position: absolute;
  left: 297px;
  top: 18px;
}
.topbar .logo svg {
  width: 23px;
  height: 32px;
  margin: 5px 17px 0 0;
}
.topbar strong, .topbar small {
  display: block;
}
.topbar strong {
  font-size: 20px;
  line-height: 28px;
}
.topbar small {
  font-size: 12px;
  line-height: 22px;
  color: #666;
}
.links {
  position: absolute;
  left: 661.500px;
  top: 22px;
  display: flex;
  gap: 8px;
}
.links a {
  position: relative;
  padding: 0 16px;
  border-radius: 8px;
  font-size: 15.2px;
  font-weight: 500;
  letter-spacing: -0.12px;
  line-height: 38px;
  color: #666;
}
.links .current {
  background: #e6f7ff;
  color: #667eea;
}
.links .current::after {
  content: "";
  position: absolute;
  left: 50%;
  bottom: 0;
  width: 4px;
  height: 4px;
  margin-left: -2px;
  border-radius: 50%;
  background: #667eea;
}
.tools {
  position: absolute;
  left: 1233px;
  top: 20px;
  display: flex;
  align-items: center;
  height: 42px;
}
.lang {
  display: flex;
  align-items: center;
  gap: 8px;
  width: 79px;
  height: 35px;
  padding-left: 16px;
  border: 1px solid #ddd;
  border-radius: 8px;
  background: #f0f0f0;
  color: #000;
  font-size: 13.6px;
}
.lang svg {
  width: 20px;
  height: 20px;
}
.gh {
  display: flex;
  align-items: center;
  gap: 9px;
  width: 142px;
  padding-left: 32px;
  font-size: 15.2px;
  font-weight: 500;
  letter-spacing: -0.15px;
  color: #666;
}
.gh svg {
  width: 20px;
  height: 20px;
}
.launch {
  width: 174px;
  height: 42px;
  border-radius: 8px;
  background: linear-gradient(135deg, #667eea 0%, #764ba2 100%);
  color: #fff;
  font-size: 15.2px;
  font-weight: 500;
}
.theme {
  position: absolute;
  right: 20px;
  top: 20px;
  display: flex;
  align-items: center;
  justify-content: center;
  width: 50px;
  height: 50px;
  border: 2px solid #e0e0e0;
  border-radius: 50%;
  background: #fff;
  box-shadow: 0 4px 12px rgba(0, 0, 0, 0.1);
}
.theme svg {
  width: 24px;
  height: 24px;
}
</style>
